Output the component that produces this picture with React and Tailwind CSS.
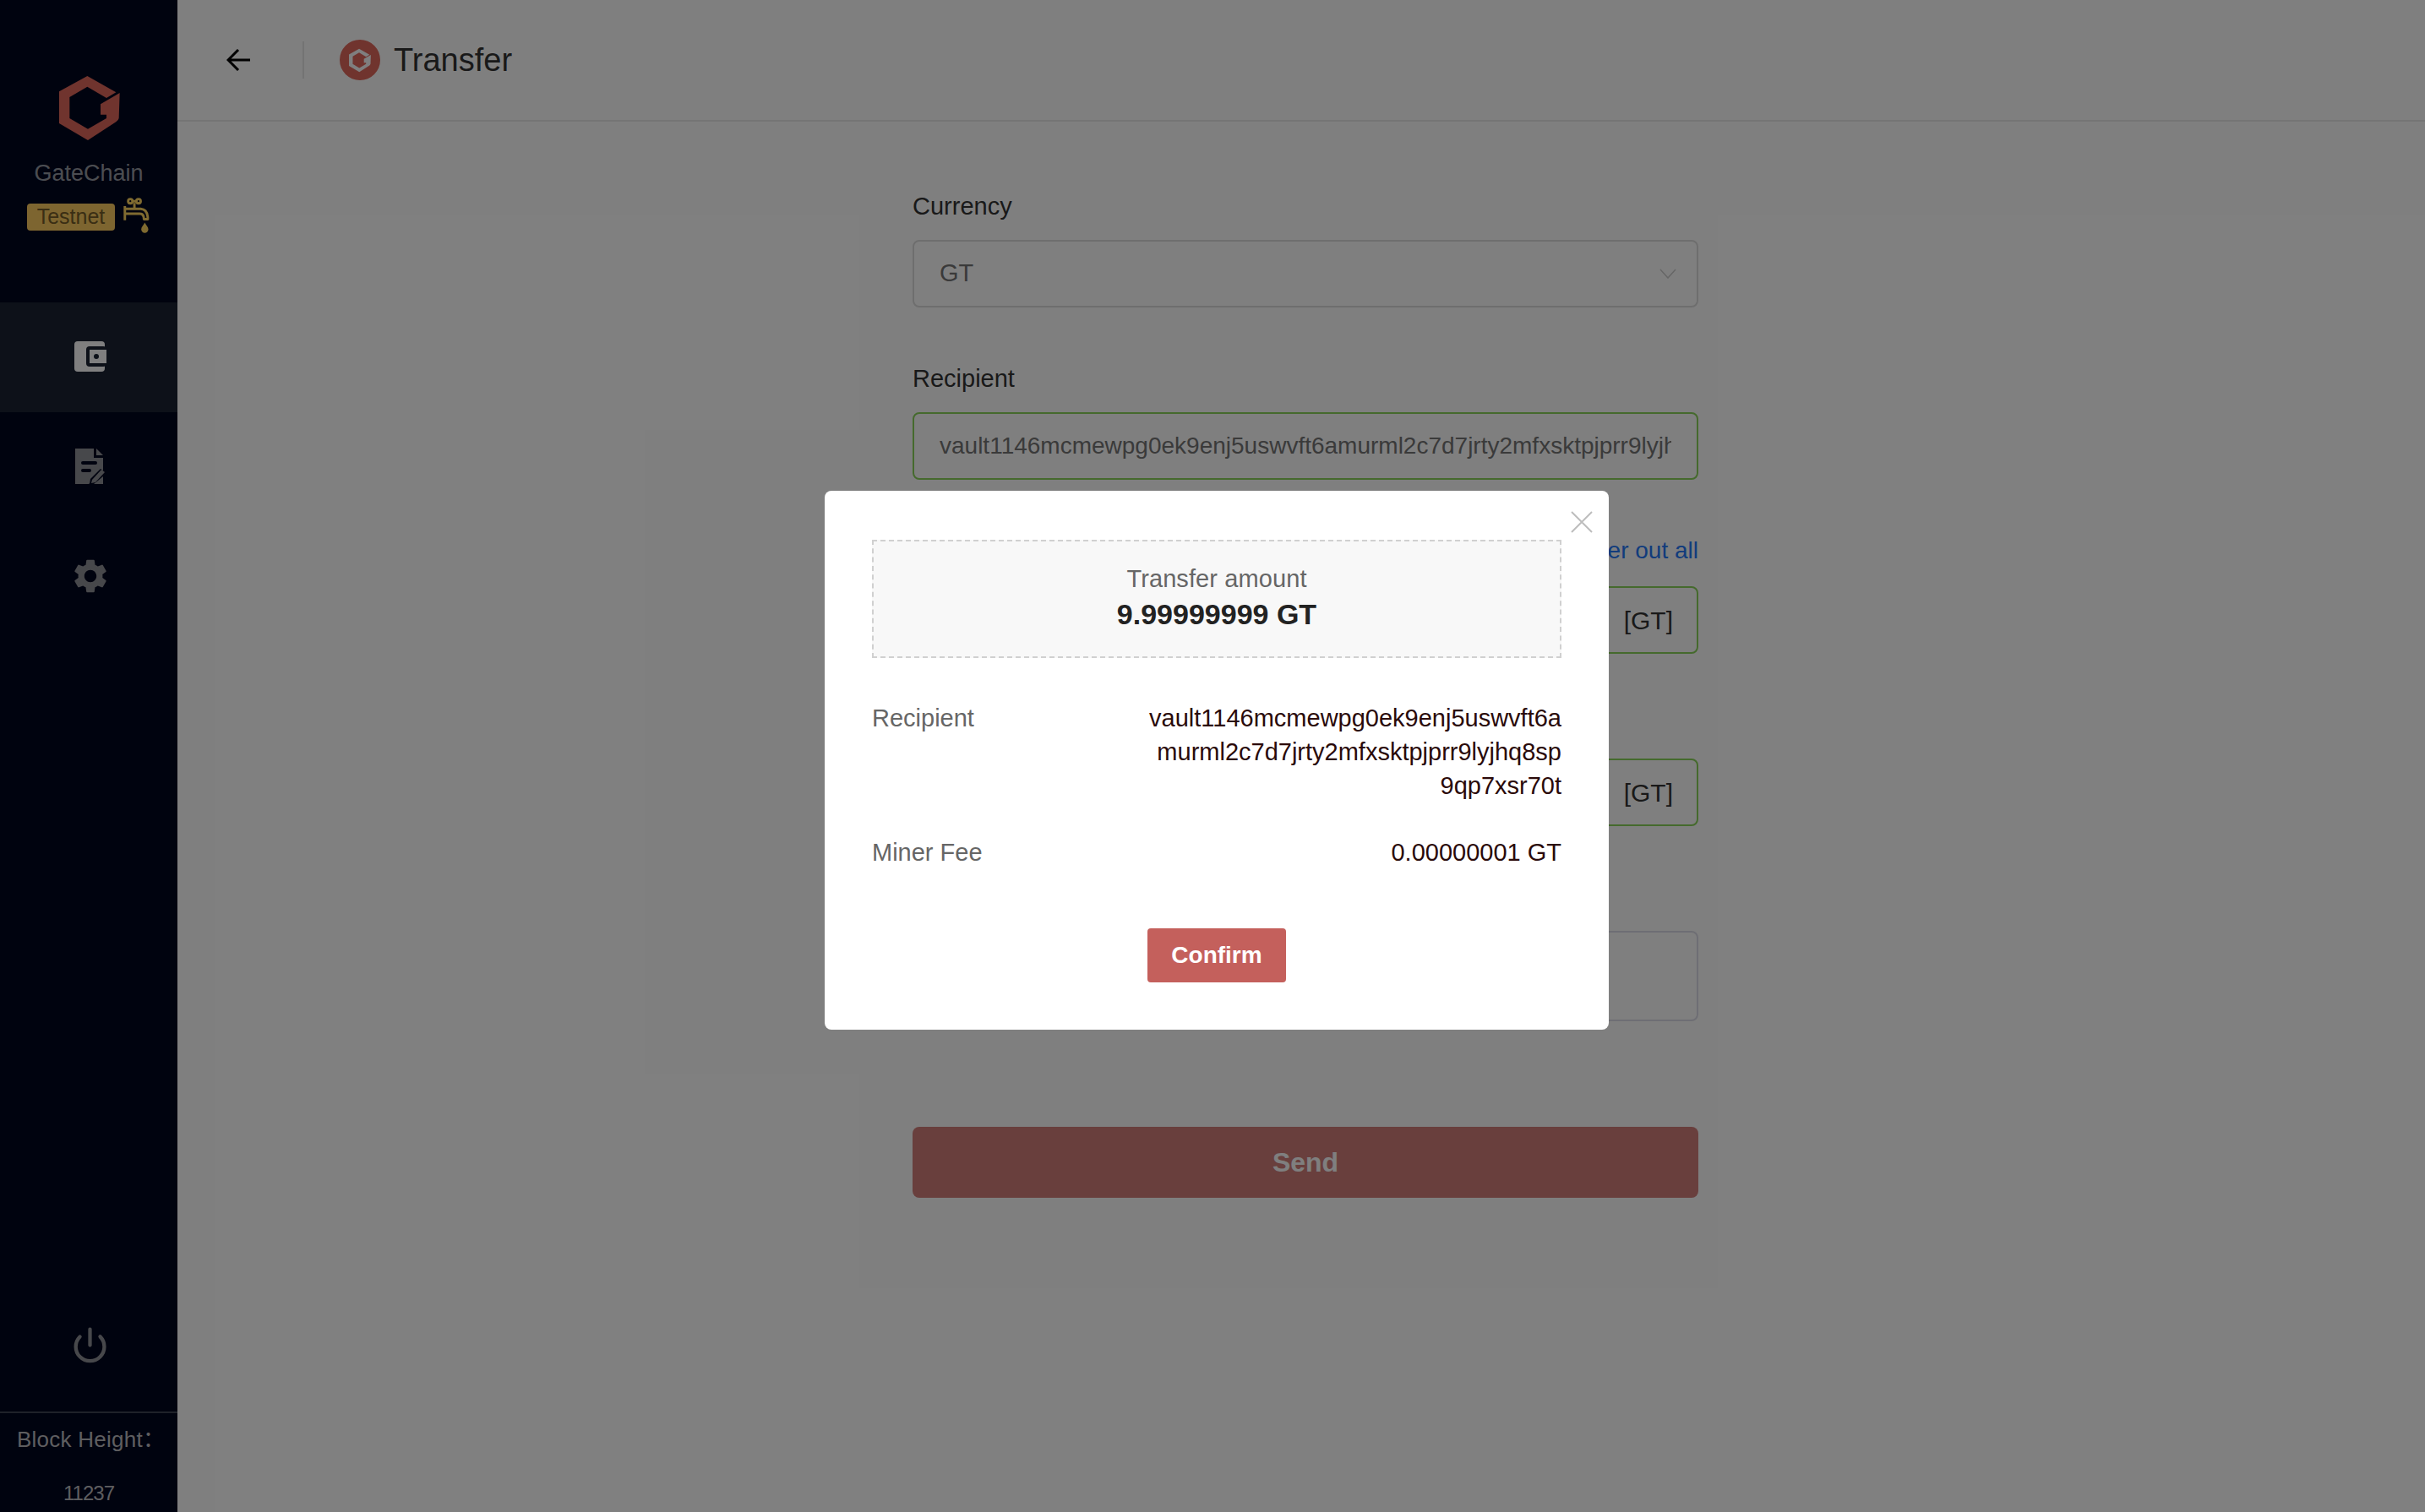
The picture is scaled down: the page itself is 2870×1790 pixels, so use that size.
import React from "react";
import { Power } from "lucide-react";
import { MdSettings } from "react-icons/md";

const ADDRESS = "vault1146mcmewpg0ek9enj5uswvft6amurml2c7d7jrty2mfxsktpjprr9lyjhq8sp9qp7xsr70t";

function GateLogo({ className, fill }) {
  return (
    <svg viewBox="60 30 216 228" className={className} fill={fill}>
      <path d="M160 30 L262 88 L228 108 L160 68 L97 105 L97 180 L162 218 L228 180 L228 167 L207 167 L207 130 L275 90 L272 180 Q270 188 262 193 L162 258 L60 198 L60 85 Z" />
    </svg>
  );
}

function Faucet({ className }) {
  return (
    <svg viewBox="45 25 95 130" className={className} fill="none" stroke="#ffd560" strokeWidth="9">
      <circle cx="70" cy="38" r="8" />
      <circle cx="100" cy="38" r="8" />
      <path d="M78 38 H92 M85 44 V64" />
      <path d="M50 56 V108 M50 66 H108 Q134 68 134 104 H120 Q120 84 104 84 H50" strokeLinejoin="round" />
      <path d="M123 116 C118 126 110 132 110 141 A13 13 0 0 0 136 141 C136 132 128 126 123 116 Z" fill="#ffd560" stroke="none" />
    </svg>
  );
}

function WalletIcon({ className }) {
  return (
    <svg viewBox="0 0 38 36" className={className}>
      <rect x="0" y="0" width="36" height="36" rx="4" fill="#ffffff" />
      <rect x="14" y="6" width="24" height="24" rx="4" fill="#1a2232" />
      <rect x="18" y="10" width="20" height="16" fill="#ffffff" />
      <circle cx="26" cy="18" r="3" fill="#1a2232" />
    </svg>
  );
}

function DocIcon({ className }) {
  return (
    <svg viewBox="0 0 36 42" className={className}>
      <path d="M0 0 H22 V11 H33 V27 L24 36 L16 42 H0 Z" fill="#8f9097" />
      <path d="M25 0 L33 8 H25 Z" fill="#8f9097" />
      <path d="M33 33 V42 H22 Z" fill="#8f9097" />
      <rect x="7" y="15" width="19" height="4" rx="2" fill="#01071e" />
      <rect x="7" y="24" width="12" height="4" rx="2" fill="#01071e" />
      <path d="M17 42 L18 36 L30 24 L35 28 L23 40 Z" fill="#01071e" />
      <path d="M19 41 L20 37 L31 25 L35 28 L24 40 Z" fill="#8f9097" />
    </svg>
  );
}

function NavRow({ active, children }) {
  return (
    <div className={active ? "flex h-[130px] items-center justify-center bg-[#1a2232] pb-0.5 pl-[3px]" : "flex h-[130px] items-center justify-center pb-0.5 pl-[3px]"}>
      {children}
    </div>
  );
}

function Field({ label, right, children, labelGap = "mb-5" }) {
  return (
    <div className="mb-16">
      <div className={`flex h-10 items-center justify-between text-[29px] leading-10 text-[#333333] ${labelGap}`}>
        <span>{label}</span>
        {right}
      </div>
      {children}
    </div>
  );
}

function AmountInput({ value }) {
  return (
    <div className="flex h-20 items-center rounded-lg border-2 border-[#8ad45a] pl-[30px] pr-7 text-[30px] text-[#757575]">
      <input readOnly value={value} className="min-w-0 flex-1 bg-transparent outline-none" />
      <span className="text-[#333333]">[GT]</span>
    </div>
  );
}

export default function App() {
  return (
    <div className="relative flex h-[1790px] w-[2870px] overflow-hidden bg-white font-['Liberation_Sans','Noto_Sans_CJK_SC',sans-serif]">
      <aside className="flex w-[210px] shrink-0 flex-col bg-[#01071e]">
        <div className="flex h-[358px] flex-col items-center pl-0.5 pt-[90px]">
          <GateLogo className="h-[76px] w-[72px]" fill="#e0685c" />
          <div className="mr-0.5 mt-5 text-[27px] leading-[38px] text-[#ffffff]/60">GateChain</div>
          <div className="mt-[10px] flex w-full items-center pl-[30px]">
            <span className="flex h-8 w-[104px] items-center justify-center rounded bg-[#fbcb60] text-[25px] text-[#755c28]">Testnet</span>
            <Faucet className="mb-[3px] ml-[10px] h-[42px] w-[31px]" />
          </div>
        </div>
        <NavRow active><WalletIcon className="h-9 w-[38px]" /></NavRow>
        <NavRow><DocIcon className="h-[42px] w-9" /></NavRow>
        <NavRow><MdSettings size={48} color="#8f9097" /></NavRow>
        <div className="mt-auto flex justify-center pb-[56px] pl-0.5">
          <Power size={45} color="#8f9097" strokeWidth={2.3} />
        </div>
        <div className="h-[119px] border-t-2 border-[#3e4452] text-[#bcbcc0]">
          <div className="mt-[15px] pl-5 text-[26px] leading-8 tracking-[0.25px]">Block Height：</div>
          <div className="mt-[32px] text-center text-[24px] leading-8 tracking-[-1px]">11237</div>
        </div>
      </aside>

      <main className="flex min-w-0 flex-1 flex-col">
        <header className="flex h-[144px] items-center border-b-2 border-[#ebebeb]">
          <svg viewBox="0 0 28 26" className="ml-[58px] h-[26px] w-7" fill="none" stroke="#000000" strokeWidth="3">
            <path d="M28 13 H2 M14 1 L2 13 L14 25" />
          </svg>
          <div className="ml-[62px] h-11 w-0.5 bg-[#e6e6e6]" />
          <div className="ml-[42px] flex h-12 w-12 items-center justify-center rounded-full bg-[#e0685c]">
            <GateLogo className="h-[31px] w-[26px]" fill="#ffffff" />
          </div>
          <h1 className="ml-4 text-[38px] leading-none text-[#333333]">Transfer</h1>
        </header>

        <div className="flex flex-1 justify-center pl-[10px] pt-20">
          <form className="w-[930px]">
            <Field label="Currency">
              <div className="flex h-20 items-center justify-between rounded-lg border-2 border-[#dcdcdc] pl-[30px] pr-6 text-[29px] text-[#757575]">
                <span>GT</span>
                <svg viewBox="0 0 20 12" className="h-3 w-5" fill="none" stroke="#cccccc" strokeWidth="1.5"><path d="M1 1 L10 11 L19 1" /></svg>
              </div>
            </Field>
            <Field label="Recipient">
              <input readOnly value={ADDRESS} className="block h-20 w-full rounded-lg border-2 border-[#8ad45a] bg-transparent px-[30px] text-[28px] text-[#757575] outline-none" />
            </Field>
            <Field label="Amount" labelGap="mb-[22px]" right={<span className="text-[28px] text-[#2478f8]">Transfer out all</span>}>
              <AmountInput value="9.99999999" />
            </Field>
            <Field label="Miner Fee">
              <AmountInput value="0.00000001" />
            </Field>
            <Field label="Memo">
              <div className="h-[107px] rounded-lg border-2 border-[#dcdce8]" />
            </Field>
            <button type="button" className="mt-[61px] h-[84px] w-full rounded-lg bg-[#d27e7a] text-[32px] font-bold text-white">Send</button>
          </form>
        </div>
      </main>

      <div className="absolute inset-0 bg-black/50" />

      <div className="absolute left-[976px] top-[581px] w-[928px] rounded-lg bg-white px-14 pb-14 pt-[58px]">
        <svg viewBox="0 0 26 26" className="absolute right-[19px] top-[24px] h-[26px] w-[26px]" fill="none" stroke="#bdbdbd" strokeWidth="2">
          <path d="M1 1 L25 25 M25 1 L1 25" />
        </svg>
        <div className="flex h-[140px] flex-col items-center justify-center gap-0.5 border-2 border-dashed border-[#d0d0d0] bg-[#f8f8f8] pb-1.5">
          <div className="text-[29px] leading-10 tracking-[0.1px] text-[#666666]">Transfer amount</div>
          <div className="text-[34px] font-bold leading-10 text-[#222222]">9.99999999 GT</div>
        </div>
        <div className="mt-[51px] flex items-start justify-between text-[29px] leading-10">
          <span className="text-[#666666]">Recipient</span>
          <span className="w-[492px] break-all text-right text-[#2a0a0a]">{ADDRESS}</span>
        </div>
        <div className="mt-[39px] flex items-start justify-between text-[29px] leading-10">
          <span className="text-[#666666]">Miner Fee</span>
          <span className="text-[#2a0a0a]">0.00000001 GT</span>
        </div>
        <div className="mt-[70px] flex justify-center">
          <button type="button" className="h-16 w-[164px] rounded bg-[#c4605c] text-[28px] font-bold text-white">Confirm</button>
        </div>
      </div>
    </div>
  );
}
